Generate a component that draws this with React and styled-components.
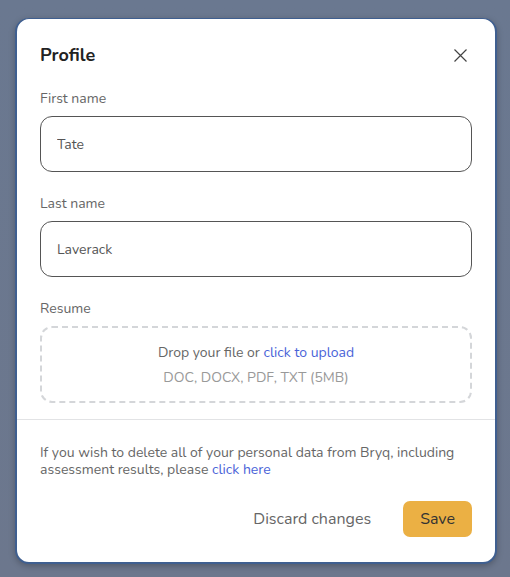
import styled, { createGlobalStyle } from 'styled-components'

const Global = createGlobalStyle`
    html, body {
        margin: 0;
        padding: 0;
        background: #6c778d;
        font-family: "Nunito", "Lato", "Noto Sans", sans-serif;
    }
`

const Backdrop = styled.div`
    width: 510px;
    height: 577px;
    box-sizing: border-box;
    padding: 18px 13px 15px 15px;
    background: linear-gradient(180deg, #6a7890 0%, #6c778d 100%);
`

const Modal = styled.div`
    background: #fff;
    border: 2px solid #3f5f90;
    border-top-width: 1px;
    border-radius: 14px;
    height: calc(100% + 2px);
    box-sizing: border-box;
    display: flex;
    flex-direction: column;
    box-shadow: 0 2px 6px rgba(0, 0, 0, 0.25);
`

const Body = styled.div`
    padding: 24px 23px 16px 23px;
    display: flex;
    flex-direction: column;
`

const Header = styled.div`
    display: flex;
    justify-content: space-between;
    align-items: center;
    margin-bottom: 22px;
`

const Title = styled.h2`
    margin: 0;
    font-size: 18px;
    font-weight: 700;
    color: #222;
`

const Close = styled.button`
    border: none;
    background: none;
    padding: 0;
    margin-right: 5px;
    display: flex;
    cursor: pointer;
`

const Label = styled.label`
    display: flex;
    flex-direction: column;
    gap: 8px;
    font-size: 14px;
    color: #666;
    margin-bottom: ${p => (p.$last ? 0 : 22)}px;
`

const Input = styled.input`
    height: 56px;
    border-radius: 12px;
    border: 1px solid #555;
    padding: 0 16px;
    box-sizing: border-box;
    font-family: inherit;
    font-size: 14px;
    color: #555;
    outline: none;
`

const Drop = styled.div`
    height: 77px;
    border: 2px dashed #d4d6d9;
    border-radius: 12px;
    box-sizing: border-box;
    display: flex;
    flex-direction: column;
    align-items: center;
    justify-content: center;
    gap: 6px;
    font-size: 14px;
    color: #666;
`

const Hint = styled.span`
    color: #999;
`

const Link = styled.a`
    color: #4a63d8;
    text-decoration: none;
    cursor: pointer;
`

const Divider = styled.hr`
    border: none;
    border-top: 1px solid #e2e3e5;
    margin: 0;
`

const Footer = styled.div`
    padding: 24px 23px 0 23px;
    display: flex;
    flex-direction: column;
`

const Note = styled.p`
    margin: 0;
    font-size: 14px;
    line-height: 17px;
    color: #666;
`

const Actions = styled.div`
    display: flex;
    justify-content: flex-end;
    align-items: center;
    gap: 32px;
    margin-top: 23px;
`

const TextButton = styled.button`
    border: none;
    background: none;
    font-family: inherit;
    font-size: 16px;
    color: #666;
    padding: 0;
    cursor: pointer;
`

const Primary = styled.button`
    border: none;
    background: #ebb044;
    border-radius: 7px;
    height: 36px;
    padding: 0 17px;
    font-family: inherit;
    font-size: 16px;
    color: #333;
    cursor: pointer;
`

export default function App() {
    return (
        <>
            <Global />
            <Backdrop>
                <Modal>
                    <Body>
                        <Header>
                            <Title>Profile</Title>
                            <Close aria-label="Close">
                                <svg width="13" height="13" viewBox="0 0 13 13">
                                    <path d="M0.5 0.5L12.5 12.5M12.5 0.5L0.5 12.5" stroke="#444" strokeWidth="1.2" />
                                </svg>
                            </Close>
                        </Header>
                        <Label>
                            First name
                            <Input defaultValue="Tate" />
                        </Label>
                        <Label>
                            Last name
                            <Input defaultValue="Laverack" />
                        </Label>
                        <Label as="div" $last>
                            Resume
                            <Drop>
                                <span>Drop your file or <Link>click to upload</Link></span>
                                <Hint>DOC, DOCX, PDF, TXT (5MB)</Hint>
                            </Drop>
                        </Label>
                    </Body>
                    <Divider />
                    <Footer>
                        <Note>
                            If you wish to delete all of your personal data from Bryq, including
                            assessment results, please <Link>click here</Link>
                        </Note>
                        <Actions>
                            <TextButton>Discard changes</TextButton>
                            <Primary>Save</Primary>
                        </Actions>
                    </Footer>
                </Modal>
            </Backdrop>
        </>
    )
}
